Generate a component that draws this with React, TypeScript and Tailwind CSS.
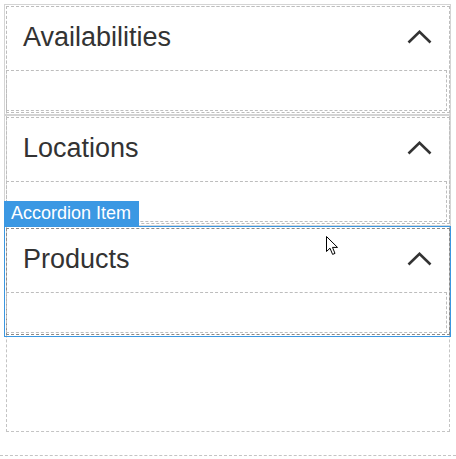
import React from "react";

const Chevron = () => (
  <svg width="25" height="14" viewBox="0 0 25 14" fill="none" className="block mb-[3px]">
    <polyline points="1.5,12.5 12.5,1.8 23.5,12.5" stroke="#333333" strokeWidth="2.6" strokeLinecap="butt" strokeLinejoin="miter" />
  </svg>
);

const Cursor = () => (
  <svg width="13" height="20" viewBox="0 0 13 20" className="block">
    <path d="M0.5 0.5 L0.5 15.5 L4 12.2 L6.6 18.4 L9 17.4 L6.5 11.4 L11.5 11.4 Z" fill="#ffffff" stroke="#000000" strokeWidth="1" strokeLinejoin="miter" />
  </svg>
);

function Item({ title, selected, first }: { title: string; selected?: boolean; first?: boolean }) {
  return (
    <div
      className={
        "relative ml-[-3px] w-[447px] h-[111px] pl-[1px] pt-[1px] pb-[1px] border " +
        (selected ? "border-[#3a96e0]" : "border-[#d4d4d4]") +
        (first ? " mt-[-3px]" : "")
      }
    >
      {selected && (
        <div className="absolute left-[-1px] top-[-26px] h-[25px] w-[135px] bg-[#3b98e3] text-white text-[18px] leading-[25px] pl-[7px] whitespace-nowrap">
          Accordion Item
        </div>
      )}
      {selected && (
        <div className="absolute left-[321px] top-[9px]">
          <Cursor />
        </div>
      )}
      <div
        className={
          "w-[444px] h-[107px] border border-dashed flex flex-col " +
          (selected ? "border-[#8a8a8a]" : "border-[#bdbdbd]")
        }
      >
        <div className="h-[63px] flex items-center justify-between pl-[16px] pr-[17px]">
          <span className="text-[27px] text-[#333333] leading-none mb-[3px]">{title}</span>
          <Chevron />
        </div>
        <div className="w-[441px] h-[41px] border border-dashed border-[#bdbdbd] ml-[-1px]" />
      </div>
    </div>
  );
}

export default function App() {
  return (
    <div
      className="w-[456px] h-[459px] bg-white overflow-hidden"
      style={{ fontFamily: '"Liberation Sans", Arial, sans-serif' }}
    >
      <div className="pt-[6px] pl-[6px]">
        <div className="w-[444px] h-[426px] border border-dashed border-[#c4c4c4]">
          <Item title="Availabilities" first />
          <Item title="Locations" />
          <Item title="Products" selected />
        </div>
      </div>
      <div className="mt-[23px] w-full border-t border-dashed border-[#c4c4c4]" />
    </div>
  );
}
